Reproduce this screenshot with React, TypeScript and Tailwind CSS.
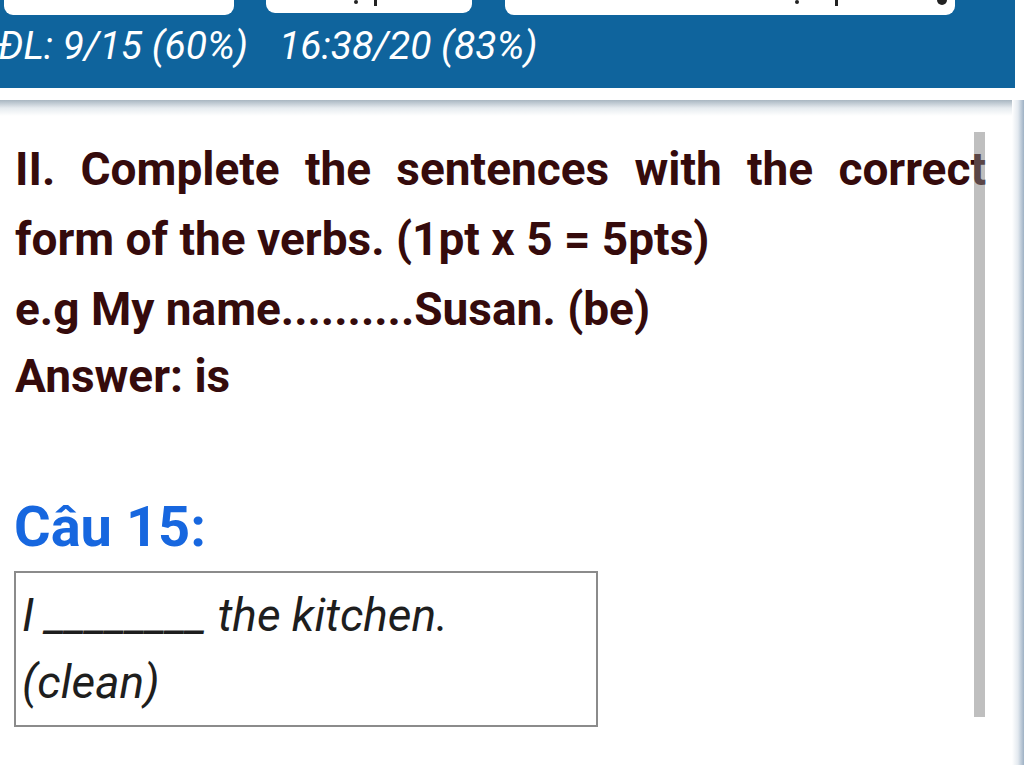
const roboto = { fontFamily: 'Roboto, "Noto Sans", sans-serif' };

export default function App() {
  return (
    <div style={roboto} className="relative flex h-[765px] w-[1024px] flex-col overflow-hidden bg-white">
      {/* top bar */}
      <header className="flex h-[88px] w-[1015px] shrink-0 flex-col bg-[#0f649d]">
        <div className="flex h-[15px] items-start">
          <div className="ml-[4px] h-[15px] w-[230px] rounded-b-[9px] bg-white" />
          <div className="relative ml-[32px] h-[13px] w-[206px] rounded-b-[9px] bg-white">
            <span className="absolute top-0 left-[88px] h-[4px] w-[4px] rounded-full bg-[#222]" />
            <span className="absolute top-0 left-[108px] h-[6px] w-[3px] bg-[#222]" />
          </div>
          <div className="relative ml-[33px] h-[15px] w-[450px] rounded-b-[9px] bg-white">
            <span className="absolute top-0 left-[290px] h-[4px] w-[4px] rounded-full bg-[#222]" />
            <span className="absolute top-0 left-[330px] h-[6px] w-[3px] bg-[#222]" />
            <span className="absolute top-0 left-[432px] h-[5px] w-[10px] rounded-b-full bg-[#222]" />
          </div>
        </div>
        <div className="mt-[11px] -ml-[2px] flex gap-[31px] text-[39px] leading-[40px] font-normal text-white italic">
          <span>ĐL: 9/15 (60%)</span>
          <span>16:38/20 (83%)</span>
        </div>
      </header>
      <div className="h-[12px] shrink-0" />

      <div className="flex flex-1">
        <main className="relative flex-1">
          <div className="h-[16px] bg-linear-to-b from-[#a9b6c1] via-[#e6ebef] to-white" />
          <div className="pt-[18px] pr-[26px] pl-[15px] text-[46px] leading-[70px] font-bold text-[#350b0c]">
            <p className="text-justify [text-align-last:justify]">II. Complete the sentences with the correct</p>
            <p>form of the verbs. (1pt x 5 = 5pts)</p>
            <p>e.g My name..........Susan. (be)</p>
            <p className="-mt-[3px]">Answer: is</p>
          </div>

          <h2 className="mt-[88px] pl-[14px] text-[56px] leading-[56px] font-bold text-[#1767df]">Câu 15:</h2>

          <div className="mt-[16px] ml-[14px] h-[156px] w-[584px] border-2 border-[#8b8b8b] pt-[9px] pl-[6px] text-[46px] leading-[67px] text-[#1e1e1e] italic">
            <p>I ________ the kitchen.</p>
            <p>(clean)</p>
          </div>

          {/* scrollbar */}
          <div className="absolute top-[32px] right-[27px] h-[585px] w-[11px] bg-[#808080]/50" />
        </main>
        <div className="w-[12px] bg-linear-to-r from-white via-[#e3e9ef] to-[#9eb1c4]" />
      </div>
    </div>
  );
}
